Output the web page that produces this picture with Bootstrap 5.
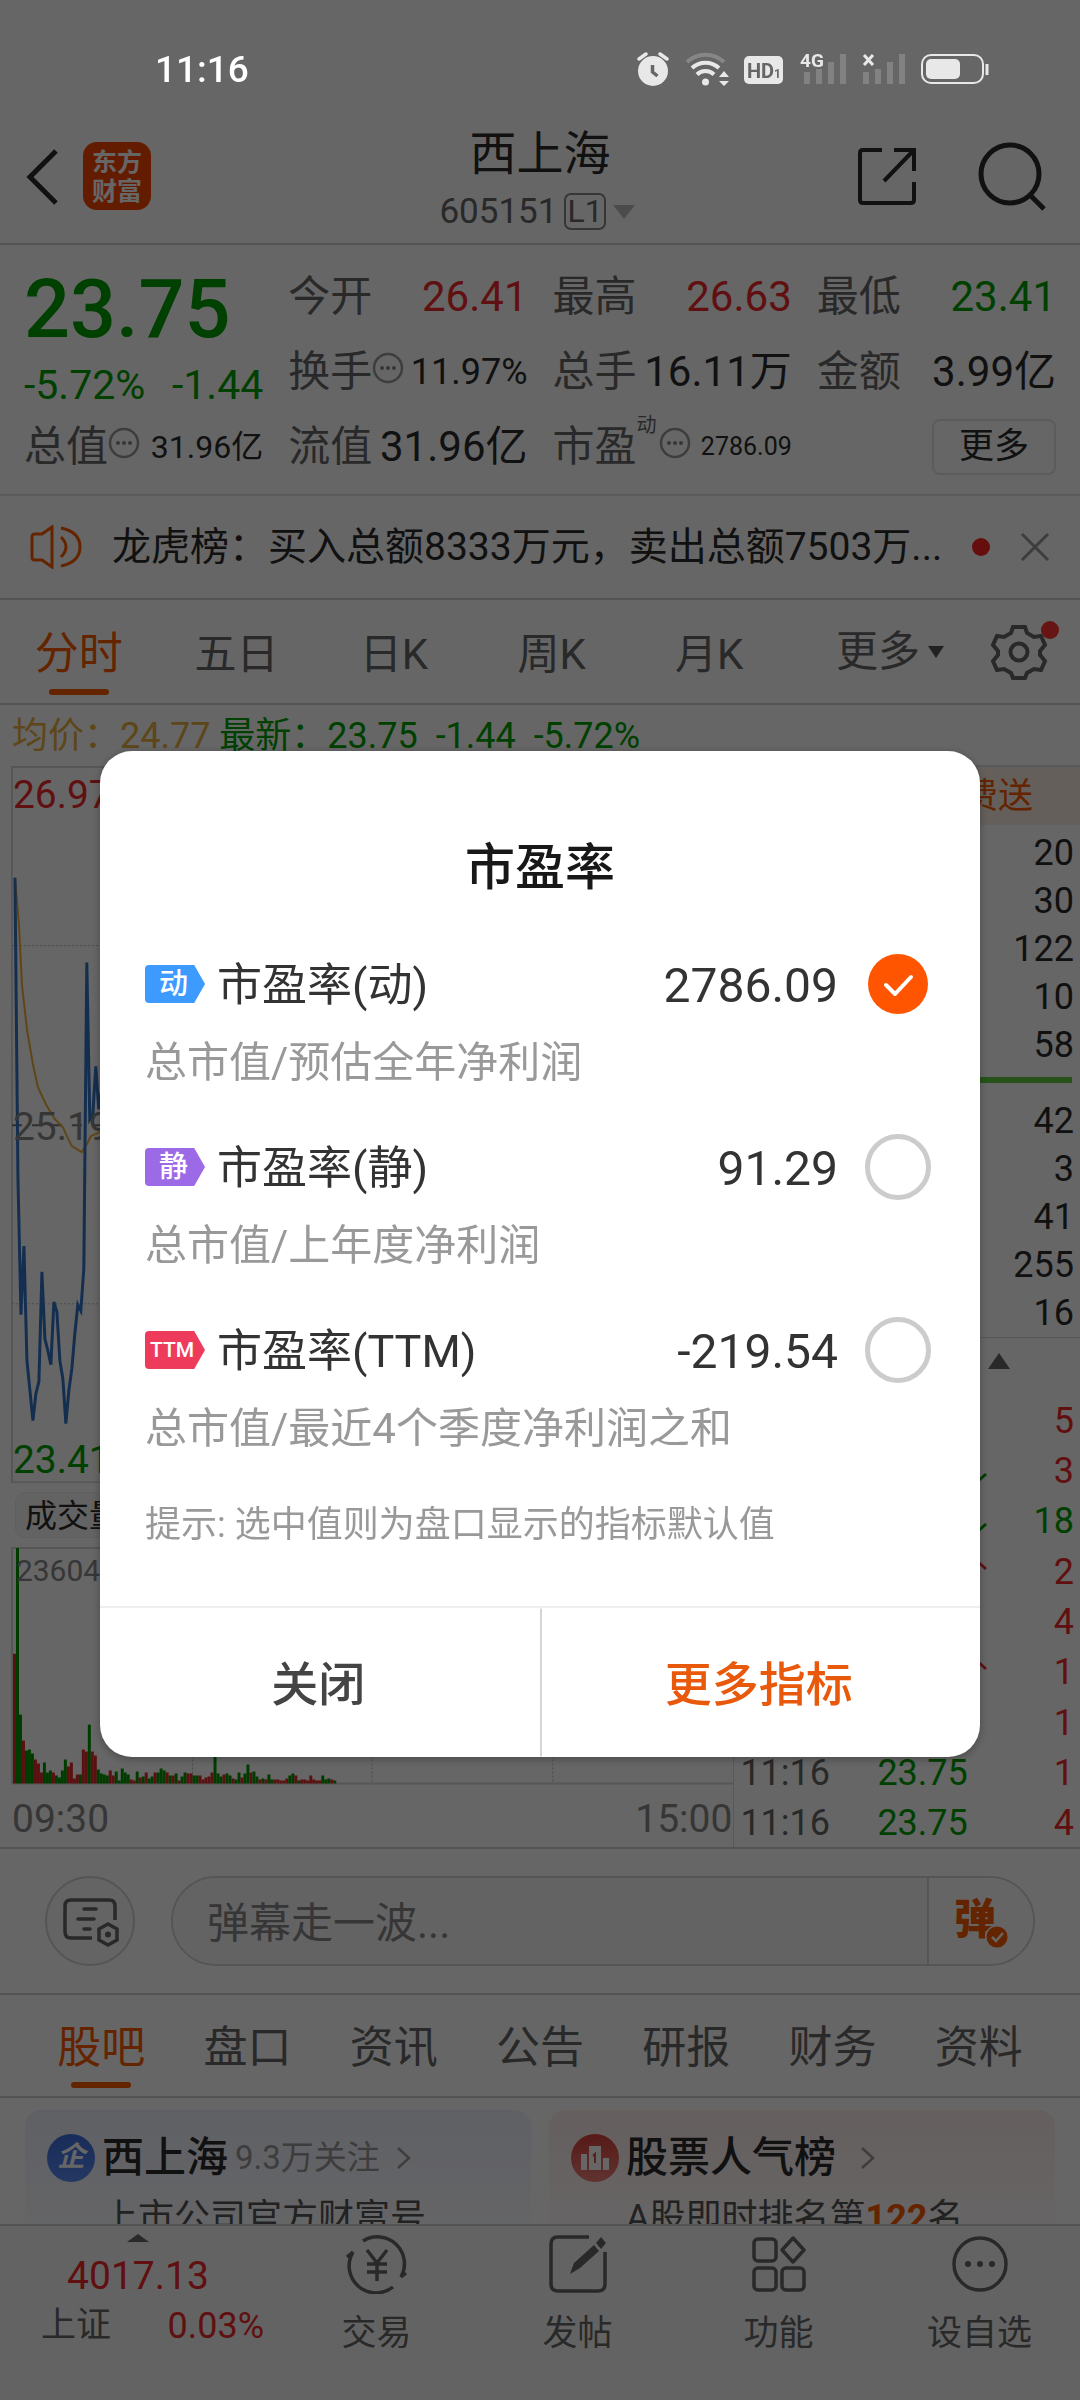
<!DOCTYPE html>
<html lang="zh-CN">
<head>
<meta charset="utf-8">
<meta name="viewport" content="width=device-width, initial-scale=1">
<title>西上海 605151</title>
<link rel="stylesheet" href="https://cdn.jsdelivr.net/npm/bootstrap@5.3.0/dist/css/bootstrap.min.css">
<style>
:root{--ink:#2b2b2b;--muted:#666;--up:#f02a2a;--down:#00a000;--brand:#fa5a00;--rule:#d0d0d0}
body{font-family:Roboto,"Noto Sans CJK SC",sans-serif;color:var(--ink);height:100vh;overflow:hidden;background:#fff}
a{color:inherit;text-decoration:none}
svg{display:block;flex:none}
button{font-family:inherit}
.plain{background:none;border:0;padding:0;color:inherit}
.up{color:var(--up)}.down{color:var(--down)}.soft{color:var(--muted)}.brand{color:var(--brand)}
.t25{font-size:25px}.t32{font-size:32px}.t33{font-size:33px}.t35{font-size:35px}.t36{font-size:36px}.t39{font-size:39px}
.rule-b{border-bottom:2px solid var(--rule)}
/* status bar stays above the dimmed page */
.statusbar{height:108px;padding:0 91px 0 155px;position:relative;z-index:1060;color:#fff;pointer-events:none}
.clock{font-size:37px;font-weight:500;line-height:44px;padding-top:48px}
.sysicons{gap:15px;padding-top:51px}
.topbar{display:grid;grid-template-columns:1fr auto 1fr;align-items:center;height:137px;padding:0 25px}
.tools{gap:60px;padding-right:8px}
.logo{width:68px;height:68px;border-radius:14px;background:#fa4600;color:#fff;font-size:25px;line-height:29px;font-weight:700;padding-top:6px;text-align:center}
.stockname{font-size:47px;line-height:58px;font-weight:400;margin:14px 0 0;text-align:center}
.stockcode{line-height:58px;gap:7px;padding-right:6px}
.level{border:2px solid #888;border-radius:7px;font-size:32px;line-height:33px;padding:0 1px}
.quote{display:grid;grid-template-columns:repeat(4,1fr);grid-auto-rows:75px;column-gap:25px;padding:14px 24px 10px;border-bottom:2px solid #e4e4e4}
.cellpair{display:flex;align-items:center;justify-content:space-between;white-space:nowrap}
.cellpair>span:first-child{color:var(--muted);font-size:42px;display:flex;align-items:center}
.cellpair svg{margin:0 0 8px}
.cellpair>b{font-weight:400;font-size:42px}
.cellpair>b.t36{font-size:36px}.cellpair>b.t32{font-size:32px}.cellpair>b.t25{font-size:25px}
.lastprice{grid-row:span 2;padding-top:6px}
.lastprice strong{display:block;font-size:81px;line-height:90px;font-weight:500}
.lastprice div{font-size:41px;line-height:60px}
.cellpair sup{font-size:20px;top:-22px;margin-right:2px}
.morebtn{width:124px;height:56px;border:2px solid #e6e6e6;border-radius:8px;background:#fff;color:var(--ink);font-size:35px;line-height:1;padding:0;margin-left:auto}
.ticker{height:104px;padding:0 30px;gap:30px}
.ktabs{height:105px}
.ktabs a,.ftabs a{flex:1 1 0;text-align:center;font-size:42px;line-height:109px;color:var(--muted);position:relative}
.ktabs .active,.ftabs .active{color:var(--brand);font-size:44px}
.ktabs .active::after,.ftabs .active::after{content:"";position:absolute;left:50%;bottom:8px;width:60px;height:6px;margin-left:-30px;border-radius:3px;background:var(--brand)}
.gearbox{width:120px}
.ktabs nav a:last-child{flex:0 0 156px}
.legendline{height:60px;line-height:62px;padding-left:12px;font-size:36px;white-space:pre}
.chartcol{flex:0 0 68%;border-right:1px solid #ddd}
.chartcol svg{width:100%;height:auto}
.chartcol text{font-family:Roboto,"Noto Sans CJK SC",sans-serif}
.voltag{height:64px;padding:9px 0 0 15px}
.voltag button{border:1px solid #eee;background:#f7f7f7;border-radius:10px;height:46px;width:150px;font-size:32px;line-height:46px;text-align:left;padding:0 0 0 9px;color:var(--ink)}
.timeline{height:62px;font-size:39px;line-height:68px;padding:0 1px 0 12px;color:#888}
.book{font-size:36px}
.promo{height:60px;background:#fdeee3;border-top:2px solid #ddd;line-height:60px;padding-right:47px;font-size:35px}
.book ol{list-style:none;margin:0;padding:0 6px}
.depth li{line-height:48px;text-align:right}
.balance{height:6px;background:#5fcb3c;margin:11px 0 14px}
.toggle{height:57px;border-top:1px solid #ddd;padding:0 70px 10px 0}
.ticks{padding-bottom:0}
.ticks li{flex:1 1 0;display:grid;grid-template-columns:88px 49px 88px 26px 1fr;align-items:center;line-height:1;padding-top:3px}
.ticks li>:last-child{text-align:right;grid-column:5}
.ticks li>svg{grid-column:4}
.danmu{height:146px;padding:0 45px;gap:36px}
.round{width:90px;height:90px;border:2px solid #d5d5d5;border-radius:50%;background:#fbfbfb;display:flex;align-items:center;justify-content:center;padding:0;flex:none}
.danmubox{height:90px;border:2px solid #d5d5d5;border-radius:45px;overflow:hidden}
.danmubox input{border:0;background:#f8f8f8;font-size:42px;padding:6px 34px 0;border-radius:0;line-height:60px}
.danmubox input::placeholder{color:#888}
.danmubox button{width:106px;border:0;border-left:2px solid #d5d5d5;background:#fcfcfc;font-size:42px;line-height:1;font-weight:900;color:var(--brand);position:relative;padding:0 12px 2px 0}
.danmubox button svg{position:absolute;left:56px;top:47px}
.ftabs{height:103px;padding:0 28px}
.ftabs a{font-size:44px;line-height:107px}
.promos{display:grid;grid-template-columns:1fr 1fr;gap:18px;padding:12px 25px 0}
.pcard{border-radius:16px;padding:18px 22px 0;height:250px;background:linear-gradient(#eef1fd,#fff 140px)}
.pcard.warm{background:linear-gradient(#fdeeec,#fff 140px)}
.phead{height:60px;gap:7px;white-space:nowrap}
.phead h2{font-size:42px;line-height:62px;font-weight:500;margin:0}
.seal{width:48px;height:48px;border-radius:50%;background:linear-gradient(#3f6fe0,#5b8cf5);color:#fff;font-size:28px;line-height:46px;font-weight:700;font-style:italic;text-align:center;flex:none}
.psub{font-size:36px;line-height:60px;padding-left:55px;color:#555;white-space:nowrap}
.dock{height:176px;flex:none;background:#f8f8f8;border-top:2px solid #ccc;color:var(--muted)}
.dockindex{width:276px;text-align:center;line-height:50px}
.dockindex .up:not(span){font-size:39px;margin-top:9px}
.dock nav a{flex:1 1 0;display:flex;flex-direction:column;align-items:center;padding-top:8px;font-size:35px}
.dock nav a span{line-height:50px;margin-top:15px}
.dimmer{background:rgba(0,0,0,.6);padding-top:108px}
.sheet{max-width:none;margin:0 100px;min-height:100%}
.sheet .modal-content{border:0;border-radius:32px;overflow:hidden;color:#333;box-shadow:0 2px 10px rgba(0,0,0,.3)}
.sheet .modal-body{padding:82px 49px 56px 45px}
.sheet h1{font-size:50px;line-height:70px;font-weight:500;text-align:center;color:#181818;margin:0 0 48px 4px}
.ratio-row{height:66px;gap:12px;font-size:45px}
.ratio-row label,.ratio-row output{padding-top:4px}
.ratio-row output{font-size:48px;margin-left:auto;padding-right:15px}
.flagtag{width:60px;height:38px;border-radius:4px;clip-path:polygon(0 0,82% 0,100% 50%,82% 100%,0 100%);color:#fff;font-size:29px;line-height:39px;font-weight:500;text-align:center;padding-right:3px}
.flagtag.ttm{font-size:21px;padding-right:6px}
.ratio-row .form-check-input{width:66px;height:66px;margin:0;border:5px solid #ccc;background-color:#fff;flex:none}
.ratio-row .form-check-input:checked{border:3px solid transparent;background-clip:padding-box;background-color:#f50;background-size:60px 60px;background-image:url("data:image/svg+xml,%3Csvg xmlns='http://www.w3.org/2000/svg' viewBox='0 0 60 60'%3E%3Cpath d='M18 31l9 9 16-17' fill='none' stroke='%23fff' stroke-width='4' stroke-linecap='round' stroke-linejoin='round'/%3E%3C/svg%3E")}
.ratio-note{font-size:42px;line-height:60px;color:#999;margin:16px 0 41px}
.ratio-hint{font-size:36px;line-height:50px;color:#999;margin:0}
.sheet .modal-footer{padding:0;border-top:2px solid #eee;flex-wrap:nowrap}
.sheet .modal-footer button{flex:1 1 0;height:149px;margin:0;padding:10px 3px 4px 0;font-size:47px;font-weight:500;color:#444;border-radius:0}
.sheet .modal-footer button+button{border-left:2px solid #d5d5d5;color:#e8590c}
</style>
<script src="https://cdn.jsdelivr.net/npm/bootstrap@5.3.0/dist/js/bootstrap.bundle.min.js"></script>
</head>
<body class="d-flex flex-column">
<div class="statusbar d-flex justify-content-between align-items-start flex-shrink-0">
  <time class="clock">11:16</time>
  <div class="sysicons d-flex">
    <svg width="34" height="36" viewBox="0 0 34 36"><path d="M3 8l7-5M31 8l-7-5" stroke="#e8e8e8" stroke-width="3.500" stroke-linecap="round"/><circle cx="17" cy="20" r="15" fill="#e8e8e8"/><path d="M16.500 14v7l5 4" fill="none" stroke="#666" stroke-width="3.500"/></svg>
    <svg width="44" height="36" viewBox="0 0 44 36" fill="none" stroke-width="4"><path d="M2 11a27 27 0 0 1 37 0" stroke="#868686"/><path d="M7 17a20 20 0 0 1 27 0M12 23.500a12 12 0 0 1 17 0" stroke="#e8e8e8"/><circle cx="20.500" cy="31" r="3.500" fill="#e8e8e8"/><path d="M39 20l5 6H34zM39 35l5-5H34z" fill="#e8e8e8"/></svg>
    <svg width="40" height="34" viewBox="0 0 40 34"><rect y="5" width="39" height="28" rx="5" fill="#e8e8e8"/><text x="3" y="27" font-size="20" font-weight="700" fill="#666" font-family="Roboto">HD</text><text x="30" y="27" font-size="12" font-weight="700" fill="#666" font-family="Roboto">1</text></svg>
    <svg width="48" height="34" viewBox="0 0 48 34"><path d="M8 21v12M20 18v15M32 11v22M44 3v30" stroke="#828282" stroke-width="6"/><text x="1" y="16" font-size="19" font-weight="700" fill="#e8e8e8" font-family="Roboto">4G</text></svg>
    <svg width="44" height="34" viewBox="0 0 44 34"><path d="M4 21v12M16 18v15M28 11v22M40 3v30" stroke="#828282" stroke-width="6"/><path d="M2 4l9 10M11 4L2 14" stroke="#e8e8e8" stroke-width="3"/></svg>
    <svg width="68" height="34" viewBox="0 0 68 34"><rect x="1" y="4" width="61" height="28" rx="9" fill="none" stroke="#e8e8e8" stroke-width="2"/><rect x="5" y="8" width="34" height="20" rx="5" fill="#e8e8e8"/><path d="M66 13v11" stroke="#e8e8e8" stroke-width="3"/></svg>
  </div>
</div>

<header class="topbar rule-b flex-shrink-0">
  <div class="d-flex align-items-center gap-4">
    <button class="plain" aria-label="返回"><svg width="34" height="58" viewBox="0 0 34 58"><path d="M31 4L5 30l26 26" fill="none" stroke="#2b2b2b" stroke-width="5"/></svg></button>
    <a href="#" class="logo">东方<br>财富</a>
  </div>
  <div>
    <h2 class="stockname">西上海</h2>
    <div class="stockcode d-flex align-items-center justify-content-center soft t35"><span>605151</span><span class="level">L1</span><svg width="22" height="14" viewBox="0 0 22 14"><path d="M0 0h22L11 14z" fill="#bbb"/></svg></div>
  </div>
  <div class="tools d-flex justify-content-end align-items-center">
    <button class="plain" aria-label="分享"><svg width="60" height="60" viewBox="0 0 60 60" fill="none" stroke="#2b2b2b" stroke-width="4"><path d="M25 4H6q-3 0-3 3v47q0 3 3 3h48q3 0 3-3V36M37 4h20v21M57 4L27 35"/></svg></button>
    <button class="plain" aria-label="搜索"><svg width="70" height="70" viewBox="0 0 70 70" fill="none" stroke="#2b2b2b" stroke-width="5"><circle cx="33" cy="33" r="29"/><path d="M54 55l13 13"/></svg></button>
  </div>
</header>

<main class="flex-fill overflow-hidden" style="min-height:0">
<section class="quote">
  <div class="lastprice down"><strong>23.75</strong><div class="d-flex justify-content-between"><span>-5.72%</span><span>-1.44</span></div></div>
  <div class="cellpair"><span>今开</span><b class="up">26.41</b></div>
  <div class="cellpair"><span>最高</span><b class="up">26.63</b></div>
  <div class="cellpair"><span>最低</span><b class="down">23.41</b></div>
  <div class="cellpair"><span>换手<svg width="32" height="32" viewBox="0 0 32 32"><use href="#dots"/></svg></span><b class="t36">11.97%</b></div>
  <div class="cellpair"><span>总手</span><b>16.11万</b></div>
  <div class="cellpair"><span>金额</span><b>3.99亿</b></div>
  <div class="cellpair"><span>总值<svg width="32" height="32" viewBox="0 0 32 32"><use href="#dots"/></svg></span><b class="t32">31.96亿</b></div>
  <div class="cellpair"><span>流值</span><b>31.96亿</b></div>
  <div class="cellpair"><span>市盈<sup>动</sup><svg width="32" height="32" viewBox="0 0 32 32"><use href="#dots"/></svg></span><b class="t25">2786.09</b></div>
  <div class="cellpair"><button class="morebtn">更多</button></div>
</section>

<section class="ticker rule-b d-flex align-items-center t39">
  <svg width="52" height="44" viewBox="0 0 52 44" fill="none" stroke="#fa5a00" stroke-width="3"><path d="M2 12q0-3 3-3h7L22 2v40L12 35H5q-3 0-3-3zM31 12q10 10 0 20M31 3q19 4 19 19T31 41"/></svg>
  <a href="#" class="text-nowrap flex-fill">龙虎榜：买入总额8333万元，卖出总额7503万...</a>
  <svg width="18" height="18" viewBox="0 0 18 18"><circle cx="9" cy="9" r="9" fill="#f22"/></svg>
  <button class="plain" aria-label="关闭公告"><svg width="30" height="30" viewBox="0 0 30 30"><path d="M2 2l26 26M28 2L2 28" stroke="#999" stroke-width="3"/></svg></button>
</section>

<section class="ktabs rule-b d-flex">
  <nav class="d-flex flex-fill"><a href="#" class="active">分时</a><a href="#">五日</a><a href="#">日K</a><a href="#">周K</a><a href="#">月K</a><a href="#" class="d-flex align-items-center justify-content-end gap-2"><span>更多</span><svg width="16" height="12" viewBox="0 0 16 12"><path d="M0 0h16L8 12z" fill="#555"/></svg></a></nav>
  <button class="plain gearbox d-flex align-items-center justify-content-center ms-3" aria-label="设置"><svg width="84" height="66" viewBox="-42 -33 84 66" fill="none" stroke="#666" stroke-width="4"><path d="M-6-24h12l2 6 7 4 7-1 4 9-5 6v4l5 6-4 9-7-1-7 4-2 5H-6l-2-5-7-4-7 1-4-9 5-6v-4l-5-6 4-9 7 1 7-4z" transform="translate(-1 -1)"/><circle cx="-1" r="8.500"/><circle cx="30" cy="-22" r="9" fill="#f33" stroke="none"/></svg></button>
</section>

<div class="legendline"><span style="color:#e8b040">均价：24.77</span><span class="down"> 最新：23.75  -1.44  -5.72%</span></div>

<section class="d-flex rule-b">
  <div class="chartcol">
    <svg viewBox="0 765 735 720">
      <path d="M735 767H12V1484H735" fill="none" stroke="#d8d8d8" stroke-width="2"/>
      <path d="M12 946H735M12 1305H735M193 767V1484M373 767V1484M554 767V1484" stroke="#bbb" stroke-width="1" stroke-dasharray="2 2"/>
      <path d="M12 1126H735" stroke="#777" stroke-width="2" stroke-dasharray="10 10"/>
      <path d="M15 878L19 925 22 985 27 1030 33 1065 38 1088 46 1105 55 1120 63 1128 67 1137 72 1147 82 1153 87 1145 91 1137 100 1133 120 1130" fill="none" stroke="#f0ac38" stroke-width="2"/>
      <path d="M15 878L18 1180 21 1316 24 1247 27 1362 30 1392 33 1422 36 1395 39 1383 42 1273 45 1340 48 1352 51 1366 54 1303 57 1313 60 1362 63 1380 66 1425 69 1392 72 1370 75 1335 78 1306 81 1312 84 1270 87 963 90 1120 93 1115 96 1067 99 1110 102 1090" fill="none" stroke="#3474c8" stroke-width="3"/>
      <text x="13" y="808" font-size="39" fill="#f02a2a">26.97</text>
      <text x="13" y="1141" font-size="39" fill="#888">25.19</text>
      <text x="13" y="1475" font-size="39" fill="#00a000">23.41</text>
    </svg>
    <div class="voltag"><button>成交量</button></div>
    <svg viewBox="0 0 735 238">
      <path d="M735 1H12V237H735" fill="none" stroke="#d8d8d8" stroke-width="2"/>
      <path d="M193 1V236M373 1V236M554 1V236" stroke="#bbb" stroke-width="1" stroke-dasharray="2 2"/>
      <g id="bars" stroke-width="3"></g>
      <text x="16" y="34" font-size="30" fill="#888">23604</text>
    </svg>
    <div class="timeline d-flex justify-content-between"><span>09:30</span><span>15:00</span></div>
  </div>
  <div class="book flex-fill d-flex flex-column">
    <a href="#" class="promo brand text-end">费送</a>
    <ol class="depth pt-1"><li>20</li><li>30</li><li>122</li><li>10</li><li>58</li></ol>
    <div class="balance mt-2 me-2"></div>
    <ol class="depth"><li>42</li><li>3</li><li>41</li><li>255</li><li>16</li></ol>
    <button class="plain toggle d-flex justify-content-end align-items-center" aria-label="展开"><svg width="22" height="16" viewBox="0 0 22 16"><path d="M0 16h22L11 0z" fill="#666"/></svg></button>
    <ol class="ticks flex-fill d-flex flex-column">
      <li class="up"><span>5</span></li>
      <li class="up"><svg width="24" height="30" viewBox="0 0 24 30"><use href="#fall"/></svg><span>3</span></li>
      <li class="down"><svg width="24" height="30" viewBox="0 0 24 30"><use href="#fall"/></svg><span>18</span></li>
      <li class="up"><svg width="24" height="30" viewBox="0 0 24 30"><use href="#rise"/></svg><span>2</span></li>
      <li class="up"><span>4</span></li>
      <li class="up"><svg width="24" height="30" viewBox="0 0 24 30"><use href="#rise"/></svg><span>1</span></li>
      <li class="up"><span>1</span></li>
      <li class="up"><span class="soft">11:16</span><i></i><span class="down">23.75</span><span>1</span></li>
      <li class="up"><span class="soft">11:16</span><i></i><span class="down">23.75</span><span>4</span></li>
    </ol>
  </div>
</section>

<section class="danmu rule-b d-flex align-items-center">
  <button class="round" aria-label="弹幕设置"><svg width="58" height="54" viewBox="0 0 58 54" fill="none" stroke="#666" stroke-width="3.500"><path d="M31 44H10q-6 0-6-6V12q0-6 6-6h38q6 0 6 6v14"/><path d="M23 15h12M17 25h16M23 35h6" stroke-linecap="round"/><path d="M47 30l9 5v11l-9 5-9-5V35z"/><circle cx="47" cy="40.500" r="3" fill="#666" stroke="none"/></svg></button>
  <div class="danmubox d-flex flex-fill"><input class="flex-fill" type="text" placeholder="弹幕走一波..." aria-label="弹幕"><button>弹<svg width="24" height="24" viewBox="0 0 24 24"><circle cx="12" cy="12" r="12" fill="#fcfcfc"/><circle cx="12" cy="12" r="10.500" fill="#fa5a00"/><path d="M7 12l4 4 7-8" fill="none" stroke="#fff" stroke-width="2.500"/></svg></button></div>
</section>

<nav class="ftabs rule-b d-flex"><a href="#" class="active">股吧</a><a href="#">盘口</a><a href="#">资讯</a><a href="#">公告</a><a href="#">研报</a><a href="#">财务</a><a href="#">资料</a></nav>

<section class="promos">
  <div class="pcard">
    <div class="phead d-flex align-items-center"><span class="seal">企</span><h2>西上海</h2><span class="t33" style="color:#999">9.3万关注</span><svg class="ms-2" width="18" height="24" viewBox="0 0 18 24"><path d="M3 2l11 10L3 22" fill="none" stroke="#999" stroke-width="2.500"/></svg></div>
    <div class="psub">上市公司官方财富号</div>
  </div>
  <div class="pcard warm">
    <div class="phead d-flex align-items-center"><svg width="48" height="48" viewBox="0 0 48 48"><defs><linearGradient id="rg" x2="0" y2="1"><stop stop-color="#d8413a"/><stop offset="1" stop-color="#f08078"/></linearGradient></defs><circle cx="24" cy="24" r="24" fill="url(#rg)"/><path d="M10 20h6v16h-6zM18 12h12v24H18zM32 24h6v12h-6z" fill="#fff"/><path d="M22 22l2-2v9" fill="none" stroke="#e05048" stroke-width="2"/></svg><h2>股票人气榜</h2><svg class="ms-3" width="18" height="24" viewBox="0 0 18 24"><path d="M3 2l11 10L3 22" fill="none" stroke="#999" stroke-width="2.500"/></svg></div>
    <div class="psub">A股即时排名第<strong class="brand">122</strong>名</div>
  </div>
</section>
</main>

<footer class="dock d-flex">
  <a href="#" class="dockindex">
    <svg class="mx-auto mt-2" width="22" height="8" viewBox="0 0 22 8"><path d="M0 8h22L11 0z" fill="#666"/></svg>
    <div class="up">4017.13</div>
    <div class="d-flex justify-content-between t36" style="padding:0 12px 0 41px"><span class="t35">上证</span><span class="up">0.03%</span></div>
  </a>
  <nav class="d-flex flex-fill">
    <a href="#"><svg width="66" height="60" viewBox="0 0 66 60" fill="none" stroke="#666" stroke-width="3.500"><path d="M19 7a27 27 0 0 1 38 36l5-4M49 53A27 27 0 0 1 9 18l-6 5" /><path d="M23 16l10 13 10-13M33 29v18M23 30h20M23 38h20"/></svg><span>交易</span></a>
    <a href="#"><svg width="60" height="60" viewBox="0 0 60 60" fill="none" stroke="#666" stroke-width="3.500"><path d="M41 3H10q-7 0-7 7v40q0 7 7 7h40q7 0 7-7V18"/><path d="M22 40l4-11L46 11l5 6L32 34zM48 9l5-6 5 6-5 6z" fill="#666" stroke="none"/></svg><span>发帖</span></a>
    <a href="#"><svg width="56" height="60" viewBox="0 0 56 60" fill="none" stroke="#666" stroke-width="3.500"><rect x="3" y="5" width="22" height="22" rx="4"/><rect x="3" y="34" width="22" height="22" rx="4"/><rect x="31" y="34" width="22" height="22" rx="4"/><path d="M42 4l11 12-11 12-11-12z" stroke-linejoin="round"/></svg><span>功能</span></a>
    <a href="#"><svg width="60" height="60" viewBox="0 0 60 60"><circle cx="30" cy="30" r="26" fill="none" stroke="#666" stroke-width="3.500"/><g fill="#666"><circle cx="18" cy="30" r="3"/><circle cx="30" cy="30" r="3"/><circle cx="42" cy="30" r="3"/></g></svg><span>设自选</span></a>
  </nav>
</footer>

<div class="modal show d-block dimmer" role="dialog" aria-labelledby="ratioTitle">
  <div class="modal-dialog modal-dialog-centered sheet">
    <div class="modal-content">
      <div class="modal-body">
        <h1 id="ratioTitle">市盈率</h1>
        <div class="ratio-row d-flex align-items-center"><span class="flagtag" style="background:#3d9aff">动</span><label for="r1">市盈率(动)</label><output>2786.09</output><input class="form-check-input" type="radio" name="ratio" id="r1" checked></div>
        <p class="ratio-note">总市值/预估全年净利润</p>
        <div class="ratio-row d-flex align-items-center"><span class="flagtag" style="background:#9c6ae6">静</span><label for="r2">市盈率(静)</label><output>91.29</output><input class="form-check-input" type="radio" name="ratio" id="r2"></div>
        <p class="ratio-note">总市值/上年度净利润</p>
        <div class="ratio-row d-flex align-items-center"><span class="flagtag ttm" style="background:#ee3b5b">TTM</span><label for="r3">市盈率(TTM)</label><output>-219.54</output><input class="form-check-input" type="radio" name="ratio" id="r3"></div>
        <p class="ratio-note">总市值/最近4个季度净利润之和</p>
        <p class="ratio-hint">提示: 选中值则为盘口显示的指标默认值</p>
      </div>
      <div class="modal-footer"><button class="btn">关闭</button><button class="btn">更多指标</button></div>
    </div>
  </div>
</div>

<svg width="0" height="0" class="position-absolute">
  <symbol id="dots" viewBox="0 0 32 32"><circle cx="16" cy="16" r="14" fill="none" stroke="#999" stroke-width="2.500"/><g fill="#888"><circle cx="10" cy="16" r="2"/><circle cx="16" cy="16" r="2"/><circle cx="22" cy="16" r="2"/></g></symbol>
  <symbol id="fall" viewBox="0 0 24 30"><path d="M11 2v24M3 18l8 9 10-9" fill="none" stroke="#00a000" stroke-width="3"/></symbol>
  <symbol id="rise" viewBox="0 0 24 30"><path d="M11 28V4M3 12l8-9 10 9" fill="none" stroke="#f02a2a" stroke-width="3"/></symbol>
</svg>
<script>
// minute volumes: r = up, g = down, number = bar height
const vol = "r130 g236 g69 r43 g33 g34 g30 r24 r20 r11 g21 g11 g13 r11 g8 g6 g13 g24 r17 r21 r5 r9 g9 r34 r32 g59 r32 r28 g14 g10 g9 g8 r13 r8 g12 g3 g15 g11 g9 r4 r3 g12 r6 g7 r11 g5 g7 r11 g11 g15 g13 r11 g8 r8 g10 r3 g7 g11 r10 r10 g8 g8 r8 r4 r6 r7 r11 g29 g10 g7 r9 g10 g8 r5 g4 g11 r6 g10 g19 r11 g12 g7 r4 g5 r4 g9 g4 r4 r4 r3 r3 r5 g8 g10 r8 g3 r4 r4 r3 r8 r4 r3 r3 g8 g4 g5 r4 g3";
document.getElementById("bars").innerHTML = vol.split(" ").map((v, i) =>
  `<path d="M${14.5 + i * 3} 237v-${v.slice(1)}" stroke="${v[0] === "r" ? "#e02828" : "#009600"}"/>`).join("");
</script>
</body>
</html>
